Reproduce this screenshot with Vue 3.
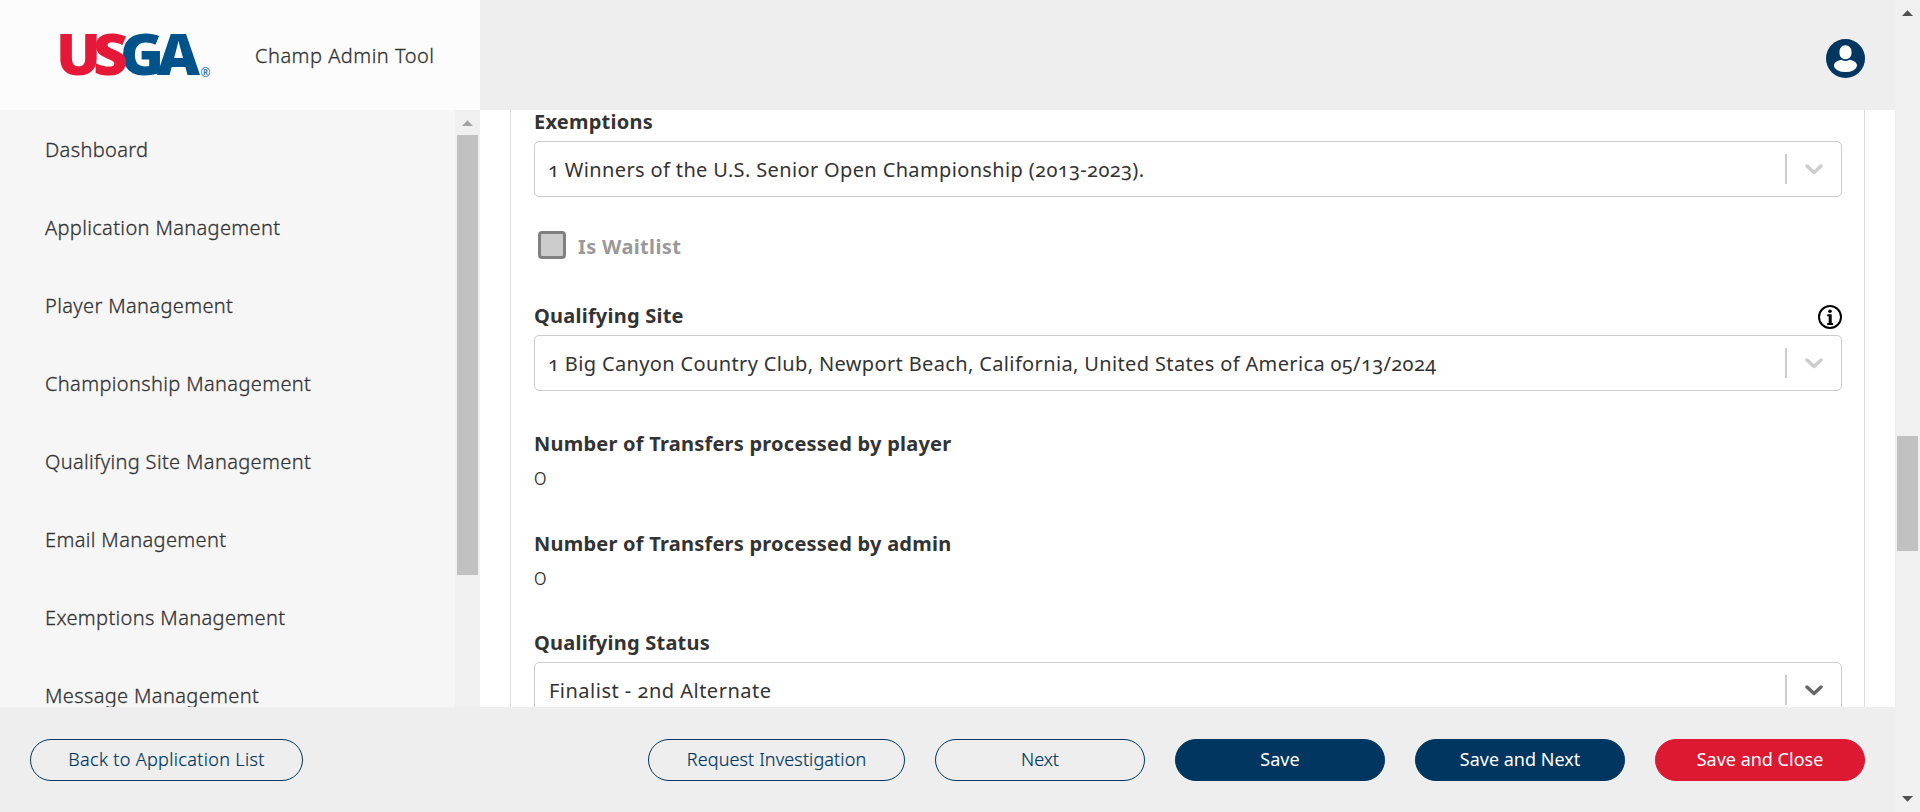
<script setup>
const navItems = [
  'Dashboard',
  'Application Management',
  'Player Management',
  'Championship Management',
  'Qualifying Site Management',
  'Email Management',
  'Exemptions Management',
  'Message Management',
]
</script>

<template>
  <div class="shell">
    <div class="page">
      <header class="header">
        <div class="brand">
          <svg class="logo" width="154" height="46" viewBox="0 0 154 46" role="img" aria-label="USGA">
            <g class="logo-letters">
              <text class="blue" x="60" y="43" textLength="44" lengthAdjust="spacingAndGlyphs">G</text>
              <text class="blue" x="97" y="43" textLength="43" lengthAdjust="spacingAndGlyphs">A</text>
              <text class="red" x="-4" y="43" textLength="45" lengthAdjust="spacingAndGlyphs">U</text>
              <text class="red" x="33" y="43" textLength="35" lengthAdjust="spacingAndGlyphs">S</text>
            </g>
            <text class="logo-mark" x="140.5" y="44.5">®</text>
          </svg>
          <span class="brand-title">Champ Admin Tool</span>
        </div>
        <svg class="avatar" width="39" height="39" viewBox="0 0 39 39">
          <circle cx="19.5" cy="19.5" r="19.5" fill="#00365f" />
          <ellipse cx="19.5" cy="26.6" rx="11.5" ry="6.4" fill="#fff" />
          <rect x="12.5" y="5" width="14" height="17" rx="7" fill="#00365f" />
          <rect x="13.5" y="6.3" width="12" height="14" rx="5.8" fill="#fff" />
        </svg>
      </header>

      <div class="body">
        <aside class="sidebar">
          <nav class="nav">
            <a v-for="item in navItems" :key="item" class="nav-item">{{ item }}</a>
          </nav>
          <div class="track side-track">
            <svg class="arrow" width="25" height="25" viewBox="0 0 25 25"><path d="M7 16 12.5 10.2 18 16Z" fill="#a3a3a3" /></svg>
            <div class="side-thumb"></div>
          </div>
        </aside>

        <main class="main">
          <section class="card">
            <div class="field exemptions">
              <label class="label">Exemptions</label>
              <div class="select">
                <span class="value">1 Winners of the U.S. Senior Open Championship (2013-2023).</span>
                <span class="separator"></span>
                <svg class="chevron" width="18" height="12" viewBox="0 0 18 12"><path d="M2 3 9 9.5 16 3" /></svg>
              </div>
            </div>

            <div class="check">
              <span class="box"></span>
              <span class="check-label">Is Waitlist</span>
            </div>

            <div class="field site">
              <div class="label-row">
                <label class="label">Qualifying Site</label>
                <svg class="info" width="24" height="24" viewBox="0 0 24 24">
                  <circle cx="12" cy="12" r="11" fill="none" stroke="#000" stroke-width="2" />
                  <circle cx="12" cy="6.3" r="1.8" />
                  <path d="M9.2 9.3H13.7V18H15V20H9.2V18H10.7V11.2H9.2Z" />
                </svg>
              </div>
              <div class="select">
                <span class="value">1 Big Canyon Country Club, Newport Beach, California, United States of America 05/13/2024</span>
                <span class="separator"></span>
                <svg class="chevron" width="18" height="12" viewBox="0 0 18 12"><path d="M2 3 9 9.5 16 3" /></svg>
              </div>
            </div>

            <div class="stat">
              <span class="label">Number of Transfers processed by player</span>
              <span class="number">0</span>
            </div>
            <div class="stat admin-stat">
              <span class="label">Number of Transfers processed by admin</span>
              <span class="number">0</span>
            </div>

            <div class="field">
              <label class="label">Qualifying Status</label>
              <div class="select">
                <span class="value status-value">Finalist - 2nd Alternate</span>
                <span class="separator"></span>
                <svg class="chevron dark" width="18" height="12" viewBox="0 0 18 12"><path d="M2 3 9 9.5 16 3" /></svg>
              </div>
            </div>
          </section>
        </main>
      </div>

      <footer class="footer">
        <button class="btn back">Back to Application List</button>
        <div class="actions">
          <button class="btn investigate">Request Investigation</button>
          <button class="btn">Next</button>
          <button class="btn primary">Save</button>
          <button class="btn primary">Save and Next</button>
          <button class="btn danger">Save and Close</button>
        </div>
      </footer>
    </div>

    <div class="track page-track">
      <svg class="arrow" width="25" height="25" viewBox="0 0 25 25"><path d="M7 16 12.5 10.2 18 16Z" fill="#505050" /></svg>
      <div class="page-thumb"></div>
      <svg class="arrow down" width="25" height="25" viewBox="0 0 25 25"><path d="M7 9 12.5 14.8 18 9Z" fill="#505050" /></svg>
    </div>
  </div>
</template>

<style>
body { margin: 0; overflow: hidden; }
</style>

<style scoped>
.shell {
  display: flex;
  width: 1920px;
  height: 812px;
  overflow: hidden;
  background: #fff;
  color: #333;
  font-family: "Noto Sans", "Open Sans", sans-serif;
  font-size: 20px;
  font-variant-numeric: oldstyle-nums;
}
.page { display: flex; flex-direction: column; width: 1895px; height: 812px; }

.header {
  display: flex;
  flex: none;
  justify-content: space-between;
  height: 110px;
  background: #eee;
}
.brand {
  display: flex;
  box-sizing: border-box;
  width: 480px;
  padding: 32px 0 0 60px;
  background: #fcfcfc;
}
.logo { flex: none; overflow: visible; }
.logo-letters { font: 800 57px "Open Sans", sans-serif; }
.red { fill: #e51937; }
.blue { fill: #00528a; }
.logo-mark { font: 12px "Open Sans", sans-serif; fill: #00528a; }
.brand-title {
  margin: 10px 0 0 41px;
  line-height: 28px;
  font-weight: 300;
  letter-spacing: 0.5px;
  white-space: nowrap;
  -webkit-text-stroke: 0.3px currentColor;
}
.avatar { margin: 39px 30px 0 0; }

.body { display: flex; height: 597px; overflow: hidden; }
.sidebar { display: flex; flex: none; width: 480px; background: #f6f6f6; }
.nav { display: flex; flex: 1; flex-direction: column; }
.nav-item {
  flex: none;
  height: 78px;
  padding-left: 45px;
  line-height: 80px;
  font-weight: 300;
  letter-spacing: 0.36px;
  white-space: nowrap;
  -webkit-text-stroke: 0.3px currentColor;
}
.track { display: flex; flex: none; flex-direction: column; align-items: center; width: 25px; background: #f0f0f0; }
.arrow { flex: none; display: block; }
.side-thumb { width: 21px; height: 440px; background: #c1c1c1; }
.page-track { height: 812px; }
.page-thumb { width: 21px; height: 115px; margin-top: 411px; background: #c1c1c1; }
.down { margin-top: auto; }

.main { flex: 1; padding: 0 30px; background: #fff; }
.card {
  box-sizing: border-box;
  width: 1355px;
  height: 800px;
  padding: 0 22px 0 23px;
  border: solid #ddd;
  border-width: 0 1px;
}
.field { display: flex; flex-direction: column; gap: 8px; }
.label { display: block; height: 23px; line-height: 23px; font-weight: 700; letter-spacing: 0.23px; white-space: nowrap; }
.label-row { display: flex; justify-content: space-between; height: 32px; padding-top: 1px; box-sizing: border-box; }
.info { margin-top: 1px; }
.select {
  display: flex;
  box-sizing: border-box;
  align-items: center;
  height: 56px;
  padding: 0 18px 0 13px;
  border: 1px solid #ccc;
  border-radius: 5px;
}
.value { flex: 1; letter-spacing: 0.36px; white-space: nowrap; }
.status-value { padding-left: 1px; letter-spacing: 0.49px; }
.separator { width: 2px; height: 30px; background: #ccc; }
.chevron { margin-left: 18px; fill: none; stroke: #ccc; stroke-width: 3.4; stroke-linecap: round; stroke-linejoin: round; }
.chevron.dark { stroke: #666; }
.check { display: flex; gap: 12px; align-items: center; height: 28px; margin: 34px 0 44px 4px; }
.box { box-sizing: border-box; width: 28px; height: 28px; border: 3px solid #808080; border-radius: 4px; background: #ccc; }
.check-label { padding-top: 2px; color: #999; font-weight: 700; letter-spacing: 0.36px; }
.site { gap: 0; height: 129px; }
.stat { height: 100px; }
.admin-stat { height: 99px; }
.number { display: block; margin-top: 10px; font-size: 23px; font-weight: 300; line-height: 23px; }

.footer {
  display: flex;
  flex: none;
  box-sizing: border-box;
  justify-content: space-between;
  height: 105px;
  padding: 32px 30px 0;
  background: #eee;
}
.actions { display: flex; gap: 30px; }
.btn {
  box-sizing: border-box;
  width: 210px;
  height: 42px;
  padding: 0 0 2px;
  border: 1px solid #00365f;
  border-radius: 21px;
  background: transparent;
  color: #00365f;
  font-family: inherit;
  font-size: 18px;
  font-weight: 300;
  white-space: nowrap;
  -webkit-text-stroke: 0.2px currentColor;
}
.back { width: 273px; letter-spacing: 0.35px; }
.investigate { width: 257px; letter-spacing: 0.12px; }
.primary,
.danger { color: #fff; font-weight: 400; -webkit-text-stroke: 0; }
.primary { background: #00365f; }
.danger { border-color: #dc1931; background: #dc1931; }
</style>
